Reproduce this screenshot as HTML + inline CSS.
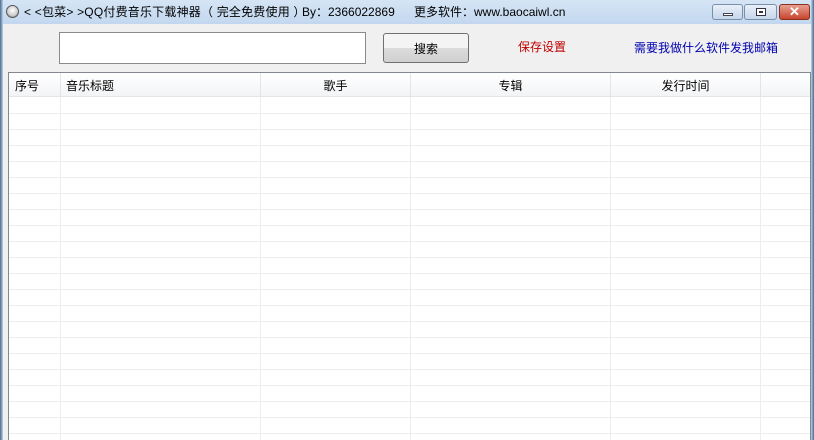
<!DOCTYPE html>
<html><head><meta charset="utf-8"><style>
*{margin:0;padding:0;box-sizing:border-box}
body{width:814px;height:440px;overflow:hidden;background:#f0f0f0;font-family:"Liberation Sans","Noto Sans CJK SC",sans-serif;font-size:12px;position:relative;color:#000}
.abs{position:absolute}
#tb{left:0;top:0;width:814px;height:24px;background:linear-gradient(#d6e5f5,#c2d7ef);}
#lf{left:0;top:0;width:3px;height:440px;background:linear-gradient(90deg,#4a6a8a,#bcd1ea)}
#rf{right:0;top:0;width:3px;height:440px;background:linear-gradient(90deg,#bcd1ea,#4a6a8a)}
.wb{top:4px;height:16px;border:1px solid #7890aa;border-radius:3px;background:linear-gradient(#e8f0f9,#c6d6ea)}
#list{left:8px;top:72px;width:803px;height:368px;background:#fff;border:1px solid #828790;border-bottom:none;overflow:hidden}
.hd{position:absolute;top:0;height:24px;line-height:27px;border-right:1px solid #e2e4e8;background:linear-gradient(#fff,#f3f4f6);border-bottom:1px solid #e5e5e5}
.row{position:absolute;left:0;width:803px;height:1px;background:#ededed}
.col{position:absolute;top:24px;width:1px;height:360px;background:#ededed}
.t{top:4px;font-size:12px;line-height:16px;white-space:nowrap}
</style></head><body>
<div class="abs" id="tb"></div>
<div class="abs" style="left:6px;top:5px;width:13px;height:13px;border-radius:50%;background:radial-gradient(circle at 50% 40%,#fff,#ccc 60%,#666);border:1px solid #555"></div>
<div class="abs t" style="left:24px;letter-spacing:0.2px">&lt; &lt;包菜&gt; &gt;QQ付费音乐下载神器（ 完全免费使用 ）</div>
<div class="abs t" style="left:302px">By：2366022869</div>
<div class="abs t" style="left:414px">更多软件：www.baocaiwl.cn</div>
<div class="abs wb" style="left:712px;width:31px"><div class="abs" style="left:10px;top:8px;width:10px;height:3px;background:#fff;border:1px solid #445"></div></div>
<div class="abs wb" style="left:744px;width:33px"><div class="abs" style="left:11px;top:3px;width:10px;height:8px;border:1px solid #334;background:#fff"><div style="margin:2px;height:2px;background:#334"></div></div></div>
<div class="abs wb" style="left:779px;width:31px;background:linear-gradient(#e8a090,#c8452e);border-color:#8a3020;color:#fff;font-weight:bold;text-align:center;line-height:13px;font-size:13px">✕</div>
<div class="abs" id="lf"></div><div class="abs" id="rf"></div>
<div class="abs" style="left:59px;top:32px;width:307px;height:32px;background:#fff;border:1px solid #8a8a8a"></div>
<div class="abs" style="left:383px;top:33px;width:86px;height:30px;border:1px solid #707070;border-radius:3px;background:linear-gradient(#f4f4f4 50%,#dcdcdc 50%,#d0d0d0);text-align:center;line-height:30px">搜索</div>
<div class="abs" style="left:518px;top:39px;color:#c00000;line-height:16px">保存设置</div>
<div class="abs" style="left:634px;top:40px;color:#0000b0;line-height:16px">需要我做什么软件发我邮箱</div>
<div class="abs" id="list">
<div class="hd" style="left:0;width:52px;padding-left:6px">序号</div>
<div class="hd" style="left:52px;width:200px;padding-left:5px">音乐标题</div>
<div class="hd" style="left:252px;width:150px;text-align:center">歌手</div>
<div class="hd" style="left:402px;width:200px;text-align:center">专辑</div>
<div class="hd" style="left:602px;width:150px;text-align:center">发行时间</div>
<div class="hd" style="left:752px;width:60px"></div>
<div class="col" style="left:51px"></div><div class="col" style="left:251px"></div><div class="col" style="left:401px"></div><div class="col" style="left:601px"></div><div class="col" style="left:751px"></div>
<div class="row" style="top:40px"></div><div class="row" style="top:56px"></div><div class="row" style="top:72px"></div><div class="row" style="top:88px"></div><div class="row" style="top:104px"></div><div class="row" style="top:120px"></div><div class="row" style="top:136px"></div><div class="row" style="top:152px"></div><div class="row" style="top:168px"></div><div class="row" style="top:184px"></div><div class="row" style="top:200px"></div><div class="row" style="top:216px"></div><div class="row" style="top:232px"></div><div class="row" style="top:248px"></div><div class="row" style="top:264px"></div><div class="row" style="top:280px"></div><div class="row" style="top:296px"></div><div class="row" style="top:312px"></div><div class="row" style="top:328px"></div><div class="row" style="top:344px"></div><div class="row" style="top:360px"></div>
</div>
</body></html>
